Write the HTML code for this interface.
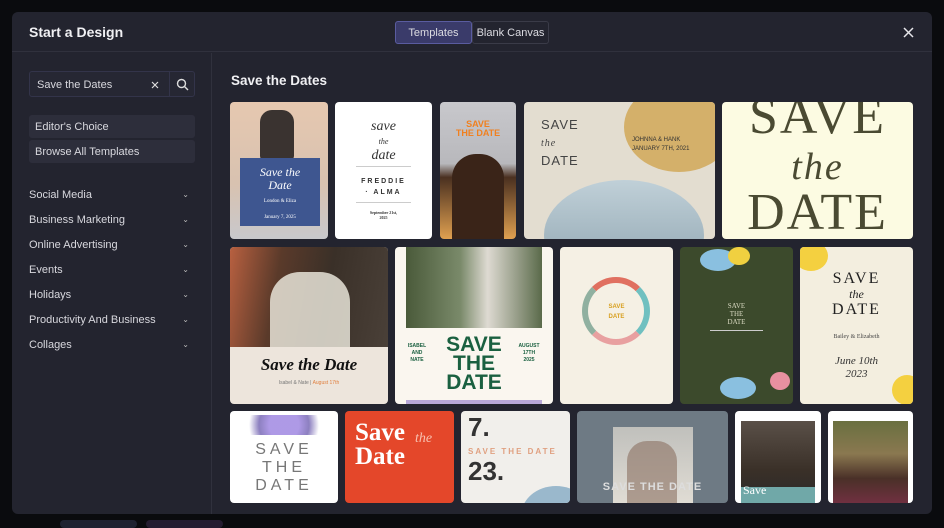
<!DOCTYPE html>
<html><head><meta charset="utf-8"><style>
*{box-sizing:border-box;margin:0;padding:0}
body{width:944px;height:526px;background:#0a0b0e;font-family:"Liberation Sans",sans-serif;position:relative;overflow:hidden;color:#e6e6ea}
.modal{position:absolute;left:12px;top:12px;width:920px;height:502px;background:#23242f;border-radius:6px;overflow:hidden}
.hdr{position:absolute;left:0;top:0;width:920px;height:40px;border-bottom:1px solid #30313d}
.title{position:absolute;left:17px;top:12px;font-size:14px;font-weight:bold;color:#f0f0f3}
.tab{position:absolute;top:9px;height:23px;font-size:11px;line-height:22px;text-align:center;border:1px solid #3a3b48;border-radius:3px;color:#dcdce2}
.side{position:absolute;left:0;top:41px;width:200px;height:461px;border-right:1px solid #30313d}
.inp{position:absolute;left:17px;top:18px;width:166px;height:26px;border:1px solid #33344a;border-radius:3px;background:#262733}
.inp span{position:absolute;left:7px;top:7px;font-size:11px;color:#d8d8de}
.btn{position:absolute;left:17px;width:166px;height:23px;background:#2d2e3b;border-radius:3px;font-size:11px;line-height:24px;padding-left:6px;color:#d8d8de}
.cat{position:absolute;left:17px;width:160px;font-size:11px;color:#d8d8de}
.cat i{position:absolute;right:0;top:1px;font-style:normal;font-size:8px;color:#bbb}
.h2{position:absolute;left:219px;top:61px;font-size:13.5px;font-weight:bold;color:#f0f0f3}
.c{position:absolute;border-radius:4px;overflow:hidden}
.c div{position:absolute}
</style></head><body>
<div class="modal">
<div class="hdr">
<div class="title">Start a Design</div>
<div class="tab" style="left:383px;width:77px;background:#3a3b6a;border-color:#5a5ca0">Templates</div>
<div class="tab" style="left:460px;width:77px">Blank Canvas</div>
<svg style="position:absolute;left:891px;top:15px" width="11" height="11" viewBox="0 0 11 11"><path d="M1 1L10 10M10 1L1 10" stroke="#e6e6ea" stroke-width="1.5"/></svg>
</div>
<div class="side">
<div class="inp"><span>Save the Dates</span>
<svg style="position:absolute;left:121px;top:9px" width="8" height="8" viewBox="0 0 8 8"><path d="M1 1L7 7M7 1L1 7" stroke="#ddd" stroke-width="1.2"/></svg>
<div style="position:absolute;left:139px;top:0;width:1px;height:24px;background:#33344a"></div>
<svg style="position:absolute;left:146px;top:6px" width="13" height="13" viewBox="0 0 13 13"><circle cx="5.5" cy="5.5" r="4" stroke="#ddd" stroke-width="1.4" fill="none"/><path d="M8.5 8.5L12 12" stroke="#ddd" stroke-width="1.4"/></svg>
</div>
<div class="btn" style="top:62px">Editor's Choice</div>
<div class="btn" style="top:87px">Browse All Templates</div>
<div class="cat" style="top:136px">Social Media<i>⌄</i></div>
<div class="cat" style="top:161px">Business Marketing<i>⌄</i></div>
<div class="cat" style="top:186px">Online Advertising<i>⌄</i></div>
<div class="cat" style="top:211px">Events<i>⌄</i></div>
<div class="cat" style="top:236px">Holidays<i>⌄</i></div>
<div class="cat" style="top:261px">Productivity And Business<i>⌄</i></div>
<div class="cat" style="top:286px">Collages<i>⌄</i></div>
</div>
<div class="h2">Save the Dates</div>

<!-- row1 -->
<div class="c" style="left:218px;top:90px;width:98px;height:137px;background:linear-gradient(#e6c8b0,#d8c2b0 60%,#c8c8cc)">
<div style="left:30px;top:8px;width:34px;height:50px;background:#3a3330;border-radius:12px 12px 4px 4px"></div>
<div style="left:10px;top:56px;width:80px;height:68px;background:#3e5690;color:#fff;text-align:center;font-family:'Liberation Serif',serif;font-style:italic;font-size:12px;padding-top:8px;line-height:13px">Save the<br>Date<br><span style="font-size:5px;font-style:normal">London &amp; Eliza<br>January 7, 2025</span></div></div>
<div class="c" style="left:323px;top:90px;width:97px;height:137px;background:#fff;color:#333;text-align:center;font-family:'Liberation Serif',serif">
<div style="left:0;width:97px;top:18px;font-style:italic;font-size:14px;line-height:14px">save<br><span style="font-size:8px">the</span><br>date</div>
<div style="left:21px;top:64px;width:55px;height:1px;background:#ccc"></div>
<div style="left:0;width:97px;top:74px;font-family:'Liberation Sans';font-size:7px;letter-spacing:2px;font-weight:bold;line-height:11px">FREDDIE<br>· ALMA</div>
<div style="left:21px;top:100px;width:55px;height:1px;background:#ccc"></div>
<div style="left:0;width:97px;top:108px;font-size:4px;font-weight:bold">September 21st,<br>2025</div></div>
<div class="c" style="left:428px;top:90px;width:76px;height:137px;background:linear-gradient(#c8c8cc,#b8b8bc 45%,#4a3020 55%,#e0a050)">
<div style="left:0;width:76px;top:18px;text-align:center;color:#f08020;font-weight:bold;font-size:9px;line-height:9px">SAVE<br>THE DATE</div>
<div style="left:12px;top:52px;width:52px;height:85px;background:#3a2418;border-radius:24px 24px 0 0"></div></div>
<div class="c" style="left:512px;top:90px;width:191px;height:137px;background:#e3ddd0">
<div style="left:100px;top:-20px;width:110px;height:90px;background:#d4b06a;border-radius:50%"></div>
<div style="left:20px;top:78px;width:160px;height:110px;background:linear-gradient(#c0d0d8,#8aa0ac);border-radius:50%"></div>
<div style="left:17px;top:14px;font-size:13px;letter-spacing:1px;color:#444;line-height:17px">SAVE<br><i style="font-family:'Liberation Serif';font-size:10px">the</i><br>DATE</div>
<div style="left:108px;top:34px;font-size:6px;color:#333;line-height:9px">JOHNNA &amp; HANK<br>JANUARY 7TH, 2021</div></div>
<div class="c" style="left:710px;top:90px;width:191px;height:137px;background:#fcfbe2;color:#4a4a32;font-family:'Liberation Serif',serif;text-align:center">
<div style="left:0;width:191px;top:-8px;font-size:52px;line-height:46px;letter-spacing:2px">SAVE<br><i style="font-size:38px">the</i><br>DATE</div></div>

<!-- row2 -->
<div class="c" style="left:218px;top:235px;width:158px;height:157px;background:#ede5dc">
<div style="left:0;top:0;width:158px;height:100px;background:linear-gradient(100deg,#b86040,#5a3a2a 30%,#3a3028 60%,#4a4038)"></div>
<div style="left:40px;top:25px;width:80px;height:75px;background:#e8e4d8;border-radius:30px 30px 0 0;opacity:.85"></div>
<div style="left:0;width:158px;top:108px;text-align:center;font-family:'Liberation Serif';font-style:italic;font-weight:bold;font-size:17px;color:#111">Save the Date</div>
<div style="left:0;width:158px;top:133px;text-align:center;font-size:5px;color:#777">Isabel &amp; Nate | <span style="color:#e08040">August 17th</span></div></div>
<div class="c" style="left:383px;top:235px;width:158px;height:157px;background:#faf6ef">
<div style="left:11px;top:0;width:136px;height:81px;background:linear-gradient(90deg,#4a5a3a,#7a8a6a 40%,#dedad2 60%,#5a6a4a)"></div>
<div style="left:0;width:158px;top:88px;text-align:center;color:#1a6040;font-weight:bold;font-size:21px;line-height:19px">SAVE<br>THE<br>DATE</div>
<div style="left:7px;top:96px;width:30px;text-align:center;color:#1a6040;font-weight:bold;font-size:5px;line-height:7px">ISABEL<br>AND<br>NATE</div>
<div style="left:116px;top:96px;width:36px;text-align:center;color:#1a6040;font-weight:bold;font-size:5px;line-height:7px">AUGUST<br>17TH<br>2025</div>
<div style="left:11px;top:153px;width:136px;height:4px;background:#b8a8d8"></div></div>
<div class="c" style="left:548px;top:235px;width:113px;height:157px;background:#f5f0e4">
<div style="left:22px;top:30px;width:68px;height:68px;border:6px solid #a8c8a0;border-radius:50%;border-color:#e07060 #70c0c0 #e8a0a0 #90b0a0"></div>
<div style="left:0;width:113px;top:55px;text-align:center;color:#d8a020;font-weight:bold;font-size:6px;line-height:10px">SAVE<br>DATE</div></div>
<div class="c" style="left:668px;top:235px;width:113px;height:157px;background:#3c4a2c">
<div style="left:20px;top:2px;width:36px;height:22px;background:#8ac0e0;border-radius:50%"></div>
<div style="left:48px;top:0;width:22px;height:18px;background:#f0d040;border-radius:50%"></div>
<div style="left:40px;top:130px;width:36px;height:22px;background:#8ac0e0;border-radius:50%"></div>
<div style="left:90px;top:125px;width:20px;height:18px;background:#e890a0;border-radius:50%"></div>
<div style="left:0;width:113px;top:55px;text-align:center;color:#d8d8c0;font-family:'Liberation Serif';font-size:7px;line-height:8px">SAVE<br>THE<br>DATE</div>
<div style="left:30px;top:83px;width:53px;height:1px;background:#ccc"></div></div>
<div class="c" style="left:788px;top:235px;width:113px;height:157px;background:#f3eedf">
<div style="left:-6px;top:-6px;width:34px;height:30px;background:#f4d040;border-radius:50%"></div>
<div style="left:92px;top:128px;width:30px;height:30px;background:#f4d040;border-radius:50%"></div>
<div style="left:0;width:113px;top:24px;text-align:center;color:#222;font-family:'Liberation Serif';font-size:16px;line-height:15px;letter-spacing:2px">SAVE<br><i style="font-size:12px;letter-spacing:0">the</i><br>DATE</div>
<div style="left:0;width:113px;top:87px;text-align:center;color:#444;font-family:'Liberation Serif';font-size:6px">Bailey &amp; Elizabeth</div>
<div style="left:0;width:113px;top:108px;text-align:center;color:#333;font-family:'Liberation Serif';font-style:italic;font-size:11px;line-height:13px">June 10th<br>2023</div></div>

<!-- row3 -->
<div class="c" style="left:218px;top:399px;width:108px;height:92px;background:#fff">
<div style="left:5px;top:4px;width:98px;height:20px;background:radial-gradient(circle,#9a80e0 30%,#7060b0 50%,transparent 70%);opacity:.8"></div>
<div style="left:0;width:108px;top:30px;text-align:center;color:#777;font-size:16px;letter-spacing:4px;line-height:18px">SAVE<br>THE<br>DATE</div></div>
<div class="c" style="left:333px;top:399px;width:109px;height:92px;background:#e4472a">
<div style="left:10px;top:10px;color:#fff;font-family:'Liberation Serif';font-weight:bold;font-size:25px;line-height:24px">Save<br>Date</div>
<div style="left:70px;top:20px;color:#f8c0b0;font-family:'Liberation Serif';font-style:italic;font-size:14px">the</div></div>
<div class="c" style="left:449px;top:399px;width:109px;height:92px;background:#f1efeb">
<div style="left:7px;top:2px;color:#333;font-weight:bold;font-size:26px;line-height:28px">7.</div>
<div style="left:7px;top:36px;color:#e0a080;font-weight:bold;font-size:8px;letter-spacing:2px">SAVE THE DATE</div>
<div style="left:7px;top:46px;color:#333;font-weight:bold;font-size:26px;line-height:28px">23.</div>
<div style="left:60px;top:75px;width:70px;height:60px;background:#9ab8cc;border-radius:50%"></div></div>
<div class="c" style="left:565px;top:399px;width:151px;height:92px;background:#6e7a84">
<div style="left:36px;top:16px;width:80px;height:76px;background:linear-gradient(#c0c0bc,#e0dcd4)"></div>
<div style="left:50px;top:30px;width:50px;height:62px;background:#8a7060;border-radius:20px 20px 0 0;opacity:.6"></div>
<div style="left:0;width:151px;top:70px;text-align:center;color:#ddd;font-weight:bold;font-size:11px;letter-spacing:1px">SAVE THE DATE</div></div>
<div class="c" style="left:723px;top:399px;width:86px;height:92px;background:#fff">
<div style="left:6px;top:10px;width:74px;height:82px;background:linear-gradient(#5a5048,#3a3028 60%,#2a2a2a)"></div>
<div style="left:6px;top:76px;width:74px;height:16px;background:#70a8a8"></div>
<div style="left:8px;top:72px;color:#fff;font-family:'Liberation Serif';font-size:12px">Save</div></div>
<div class="c" style="left:816px;top:399px;width:85px;height:92px;background:#fff">
<div style="left:5px;top:10px;width:75px;height:82px;background:linear-gradient(#6a7040,#8a7850 40%,#4a3028 70%,#703040)"></div></div>
</div>
<div style="position:absolute;left:60px;top:520px;width:77px;height:8px;background:#1e2230;border-radius:4px"></div>
<div style="position:absolute;left:146px;top:520px;width:77px;height:8px;background:#241c30;border-radius:4px"></div>
</body></html>
